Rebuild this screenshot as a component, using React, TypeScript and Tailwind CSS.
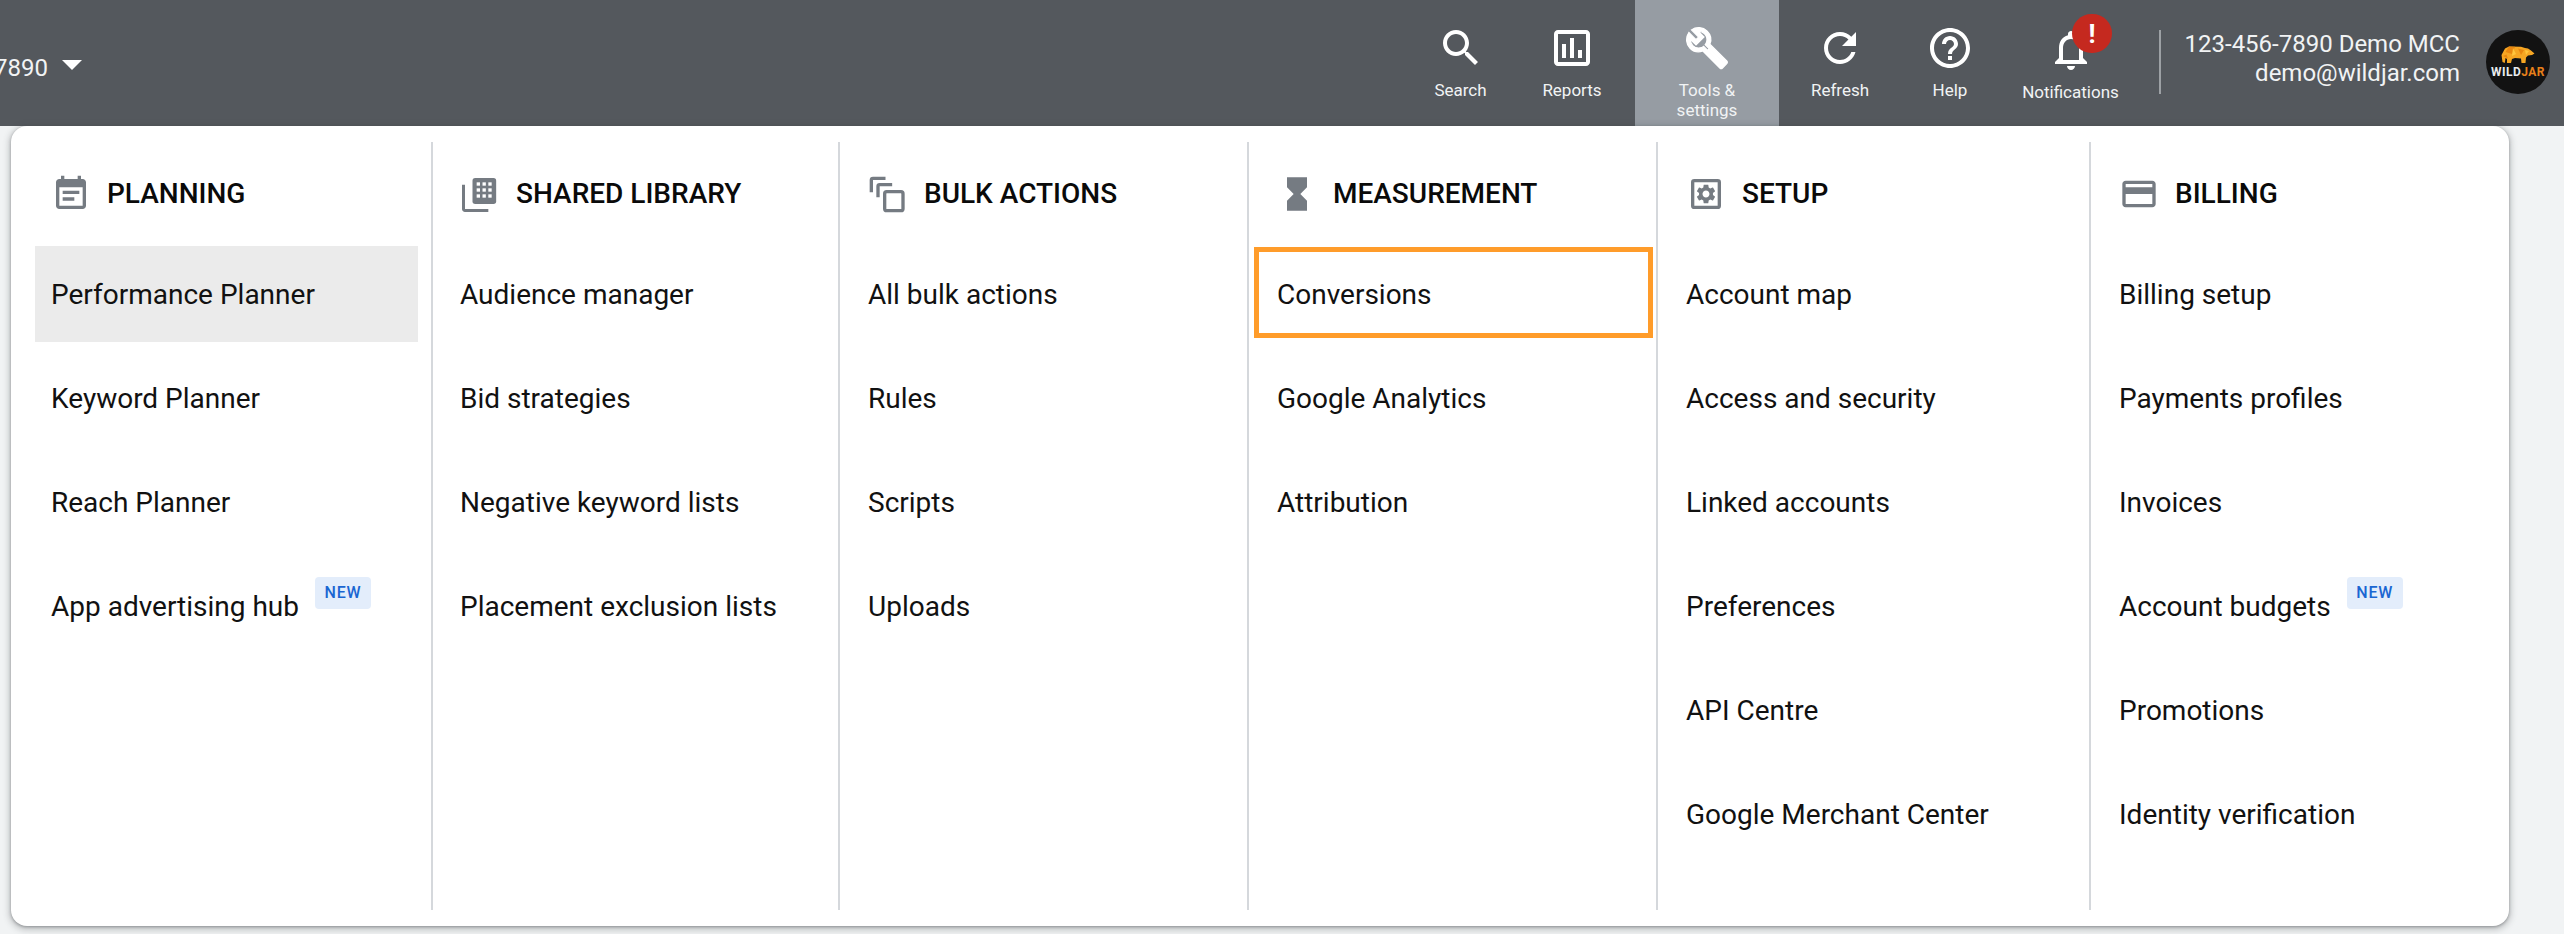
import type { ReactNode } from 'react';

const font = { fontFamily: 'Roboto, sans-serif' };

const GEAR =
  'M19.14 12.94c.04-.3.06-.61.06-.94 0-.32-.02-.64-.07-.94l2.03-1.58c.18-.14.23-.41.12-.61l-1.92-3.32c-.12-.22-.37-.29-.59-.22l-2.39.96c-.5-.38-1.03-.7-1.62-.94l-.36-2.54c-.04-.24-.24-.41-.48-.41h-3.84c-.24 0-.43.17-.47.41l-.36 2.54c-.59.24-1.13.57-1.62.94l-2.39-.96c-.22-.08-.47 0-.59.22L2.74 8.87c-.12.21-.08.47.12.61l2.03 1.58c-.05.3-.09.63-.09.94s.02.64.07.94l-2.03 1.58c-.18.14-.23.41-.12.61l1.92 3.32c.12.22.37.29.59.22l2.39-.96c.5.38 1.03.7 1.62.94l.36 2.54c.05.24.24.41.48.41h3.84c.24 0 .44-.17.47-.41l.36-2.54c.59-.24 1.13-.56 1.62-.94l2.39.96c.22.08.47 0 .59-.22l1.92-3.32c.12-.22.07-.47-.12-.61l-2.01-1.58zM12 15.6c-1.98 0-3.6-1.62-3.6-3.6s1.62-3.6 3.6-3.6 3.6 1.62 3.6 3.6-1.62 3.6-3.6 3.6z';

function Glyph({ size, children }: { size: number; children: ReactNode }) {
  return (
    <svg width={size} height={size} viewBox="0 0 24 24" fill="currentColor" className="shrink-0">
      {children}
    </svg>
  );
}

const headIcons: Record<string, ReactNode> = {
  planning: (
    <path d="M17 10H7v2h10v-2zm2-7h-1V1h-2v2H8V1H6v2H5c-1.11 0-1.99.9-1.99 2L3 19c0 1.1.89 2 2 2h14c1.1 0 2-.9 2-2V5c0-1.1-.9-2-2-2zm0 16H5V8h14v11zm-5-5H7v2h7v-2z" />
  ),
  library: (
    <>
      <path d="M1.2 6.5H3V21h14v1.8H3c-1 0-1.8-.8-1.8-1.8V6.5z" />
      <rect x="7.5" y="2.4" width="14.2" height="15.6" rx="1.6" />
      {[10, 13.5, 17].map((x) =>
        [5, 8.6, 12.2].map((y) => <rect key={`${x}-${y}`} x={x} y={y} width="2" height="2" fill="#fff" />)
      )}
    </>
  ),
  bulk: (
    <g fill="none" stroke="currentColor" strokeWidth="2">
      <path d="M2 11V3.6c0-.6.4-1 1-1h7.5" />
      <path d="M6 14V7.4c0-.6.4-1 1-1h7.5" />
      <rect x="10" y="10.6" width="11" height="11.4" rx="1.2" />
    </g>
  ),
  measurement: (
    <path d="M6 2v6h.01L6 8.01 10 12l-4 4 .01.01H6V22h12v-5.99h-.01L18 16l-4-4 4-3.99-.01-.01H18V2H6z" />
  ),
  setup: (
    <>
      <rect x="4" y="4" width="16" height="16" rx="1" fill="none" stroke="currentColor" strokeWidth="2" />
      <path transform="translate(5 5) scale(.583)" d={GEAR} />
    </>
  ),
  billing: (
    <path d="M20 4H4c-1.11 0-1.99.89-1.99 2L2 18c0 1.11.89 2 2 2h16c1.11 0 2-.89 2-2V6c0-1.11-.89-2-2-2zm0 14H4v-6h16v6zm0-10H4V6h16v2z" />
  ),
};

const columns = [
  {
    title: 'PLANNING',
    icon: 'planning',
    box: 'w-[422px] pl-6 pr-[13px]',
    items: ['Performance Planner', 'Keyword Planner', 'Reach Planner', 'App advertising hub'],
  },
  {
    title: 'SHARED LIBRARY',
    icon: 'library',
    box: 'w-[407px] pl-[11px] pr-3',
    items: ['Audience manager', 'Bid strategies', 'Negative keyword lists', 'Placement exclusion lists'],
  },
  {
    title: 'BULK ACTIONS',
    icon: 'bulk',
    box: 'w-[409px] pl-3 pr-3',
    items: ['All bulk actions', 'Rules', 'Scripts', 'Uploads'],
  },
  {
    title: 'MEASUREMENT',
    icon: 'measurement',
    box: 'w-[409px] pl-3 pr-3',
    items: ['Conversions', 'Google Analytics', 'Attribution'],
  },
  {
    title: 'SETUP',
    icon: 'setup',
    box: 'w-[433px] pl-3 pr-3',
    items: ['Account map', 'Access and security', 'Linked accounts', 'Preferences', 'API Centre', 'Google Merchant Center'],
  },
  {
    title: 'BILLING',
    icon: 'billing',
    box: 'flex-1 pl-3 pr-3',
    items: ['Billing setup', 'Payments profiles', 'Invoices', 'Account budgets', 'Promotions', 'Identity verification'],
  },
];

const newItems = ['App advertising hub', 'Account budgets'];

function NavItem({
  width,
  label,
  active,
  top,
  children,
}: {
  width: string;
  label: ReactNode;
  active?: boolean;
  top?: string;
  children: ReactNode;
}) {
  return (
    <div className={`${width} ${top ?? 'pt-6'} ${active ? 'bg-[#969ca3]' : ''} flex h-[126px] shrink-0 flex-col items-center`}>
      {children}
      <div className="mt-2 text-center text-[17px] leading-5 text-[#f1f3f4]">{label}</div>
    </div>
  );
}

function Avatar() {
  return (
    <div className="flex h-16 w-16 shrink-0 flex-col items-center rounded-full bg-[#121212] pt-[16px]">
      <svg width="34" height="18" viewBox="0 0 34 18" className="shrink-0">
        <path
          d="M1.5 16 .5 9 4 2.5 8 .5 20 .8 24 2 27 2.5 30 4.5 33.5 7.5 31 9 27 9.5 25 11.5 24.5 17 20.5 17 20 12.5 14 12 11 13 10 17 6 17 6 13 4.5 12 3.8 17z"
          fill="#f6a623"
        />
        <path d="M8 .5 14 .8 11 8 4.5 6zM17 2.5l6 1.5-3 5zM2 10l3.5-1.5 1.5 4z" fill="#e8860f" />
        <path d="M12 2l3 6-4 2zM24 4l4 1-3 4z" fill="#ffc53d" />
      </svg>
      <div className="mt-[1px] flex text-[12px] font-bold leading-[14px] tracking-[.5px]">
        <span className="text-[#e8eaed]">WILD</span>
        <span className="text-[#e8801a]">JAR</span>
      </div>
    </div>
  );
}

export default function App() {
  return (
    <div className="h-[934px] w-[2564px] overflow-hidden bg-[#f1f3f4]" style={font}>
      <header className="relative z-0 flex h-[126px] items-start bg-[#54585d] text-white">
        <div className="flex h-full w-[48px] shrink-0 items-center justify-end overflow-hidden pt-[10px]">
          <span className="whitespace-nowrap text-[24px] text-[#f1f3f4]">123-456-7890</span>
        </div>
        <svg width="20" height="10" viewBox="0 0 20 10" className="ml-[14px] mt-[60px] shrink-0">
          <path d="M0 0h20L10 10z" fill="#fff" />
        </svg>

        <div className="ml-auto flex items-start">
          <NavItem width="w-[111px]" label="Search">
            <Glyph size={48}>
              <path d="M15.5 14h-.79l-.28-.27C15.41 12.59 16 11.11 16 9.5 16 5.91 13.09 3 9.5 3S3 5.91 3 9.5 5.91 16 9.5 16c1.61 0 3.09-.59 4.23-1.57l.27.28v.79l5 4.99L20.49 19l-4.99-5zm-6 0C7.01 14 5 11.99 5 9.5S7.01 5 9.5 5 14 7.01 14 9.5 11.99 14 9.5 14z" />
            </Glyph>
          </NavItem>
          <NavItem width="w-[112px] mr-[7px]" label="Reports">
            <Glyph size={48}>
              <path d="M19 3H5c-1.1 0-2 .9-2 2v14c0 1.1.9 2 2 2h14c1.1 0 2-.9 2-2V5c0-1.1-.9-2-2-2zm0 16H5V5h14v14zM9 17H7v-7h2v7zm4 0h-2V7h2v10zm4 0h-2v-4h2v4z" />
            </Glyph>
          </NavItem>
          <NavItem width="w-[144px]" active label={<>Tools &<br />settings</>}>
            <Glyph size={48}>
              <path
                transform="translate(.85 .85) scale(.93)"
                stroke="currentColor"
                strokeWidth=".7"
                d="M22.61 18.99l-9.08-9.08c.93-2.34.45-5.1-1.44-7C9.79.61 6.21.4 3.66 2.26L7.5 6.11 6.08 7.52 2.25 3.69C.39 6.23.6 9.82 2.9 12.11c1.86 1.86 4.57 2.35 6.89 1.48l9.11 9.11c.39.39 1.02.39 1.41 0l2.3-2.3c.4-.38.4-1.01 0-1.41zm-3 1.6l-9.46-9.46c-.61.45-1.29.72-2 .82-1.36.2-2.79-.21-3.83-1.25C3.37 9.76 2.93 8.5 3 7.26l3.09 3.09 4.24-4.24-3.09-3.09c1.24-.07 2.49.37 3.44 1.31 1.08 1.08 1.49 2.57 1.24 3.96-.12.71-.42 1.37-.88 1.96l9.45 9.45-.88.88z"
              />
              <path transform="translate(.85 .85) scale(.93)" d="M13 12l7.6 7.6-1 1-7.6-7.6z" />
            </Glyph>
          </NavItem>
          <NavItem width="w-[122px]" label="Refresh">
            <Glyph size={48}>
              <path d="M17.65 6.35C16.2 4.9 14.21 4 12 4c-4.42 0-7.99 3.58-7.99 8s3.57 8 7.99 8c3.73 0 6.84-2.55 7.73-6h-2.08c-.82 2.33-3.04 4-5.65 4-3.31 0-6-2.69-6-6s2.69-6 6-6c1.66 0 3.14.69 4.22 1.78L13 11h7V4l-2.35 2.35z" />
            </Glyph>
          </NavItem>
          <NavItem width="w-[98px]" label="Help">
            <Glyph size={48}>
              <path d="M11 18h2v-2h-2v2zm1-16C6.48 2 2 6.48 2 12s4.48 10 10 10 10-4.48 10-10S17.52 2 12 2zm0 18c-4.41 0-8-3.59-8-8s3.59-8 8-8 8 3.59 8 8-3.59 8-8 8zm0-14c-2.21 0-4 1.79-4 4h2c0-1.1.9-2 2-2s2 .9 2 2c0 2-3 1.75-3 5h2c0-2.25 3-2.5 3-5 0-2.21-1.79-4-4-4z" />
            </Glyph>
          </NavItem>
          <NavItem width="w-[143px] relative" top="pt-[26px]" label="Notifications">
            <Glyph size={48}>
              <path d="M12 22c1.1 0 2-.9 2-2h-4c0 1.1.9 2 2 2zm6-6v-5c0-3.07-1.63-5.64-4.5-6.32V4c0-.83-.67-1.5-1.5-1.5s-1.5.67-1.5 1.5v.68C7.64 5.36 6 7.92 6 11v5l-2 2v1h16v-1l-2-2zm-2 1H8v-6c0-2.48 1.51-4.5 4-4.5s4 2.02 4 4.5v6z" />
            </Glyph>
            <span className="absolute left-[73px] top-[14px] flex h-[39px] w-[40px] items-center justify-center rounded-full bg-[#c5291f] text-[26px] font-bold leading-none text-white">
              !
            </span>
          </NavItem>
        </div>

        <div className="ml-[17px] mt-[30px] h-16 w-[2px] shrink-0 bg-[#9da1a5]" />
        <div className="ml-[21px] mt-[30px] w-[278px] shrink-0 text-right text-[24px] leading-[29px] text-[#f1f3f4]">
          <div className="whitespace-nowrap">123-456-7890 Demo MCC</div>
          <div>demo@wildjar.com</div>
        </div>
        <div className="ml-[26px] mr-[14px] mt-[30px]">
          <Avatar />
        </div>
      </header>

      <main className="relative z-10 mx-[11px] flex h-[800px] w-[2498px] rounded-[16px] bg-white py-4 shadow-[0_2px_6px_2px_rgba(60,64,67,.25),0_1px_3px_rgba(60,64,67,.4)]">
        {columns.map((col, i) => (
          <section
            key={col.title}
            className={`${col.box} ${i < columns.length - 1 ? 'border-r-2 border-[#d5d8dc]' : ''} h-full shrink-0`}
          >
            <div className="flex h-[104px] items-center gap-4 pl-4 text-[#757b82]">
              <Glyph size={40}>{headIcons[col.icon]}</Glyph>
              <h3 className="text-[28px] font-medium text-[#0a0a0a]">{col.title}</h3>
            </div>
            <ul className="flex flex-col gap-2">
              {col.items.map((item) => (
                <li
                  key={item}
                  className={`${item === 'Performance Planner' ? 'bg-[#ebebeb]' : ''} relative flex h-24 items-center px-4 pt-[2px] text-[28px] text-[#111]`}
                >
                  <span className="whitespace-nowrap">{item}</span>
                  {newItems.includes(item) && (
                    <span className="ml-4 mb-[28px] flex h-8 w-14 items-center justify-center rounded-[4px] bg-[#e3edfb] text-[16px] font-medium tracking-[.8px] text-[#1a66d2]">
                      NEW
                    </span>
                  )}
                  {item === 'Conversions' && (
                    <span className="absolute bottom-[4px] left-[-7px] right-[-9px] top-[1px] border-[5px] border-[#ff9c2a]" />
                  )}
                </li>
              ))}
            </ul>
          </section>
        ))}
      </main>
    </div>
  );
}
